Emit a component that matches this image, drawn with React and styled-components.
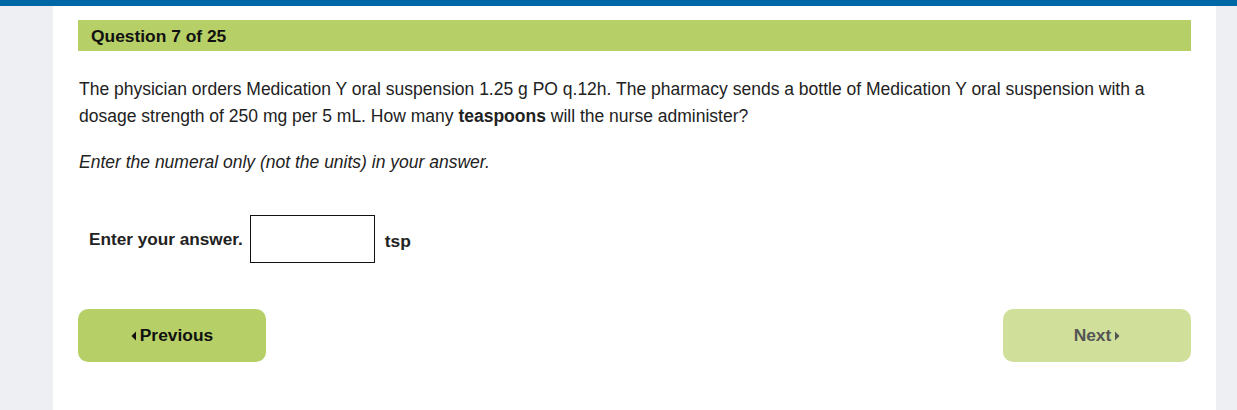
import styled, { createGlobalStyle } from "styled-components";

const GlobalStyle = createGlobalStyle`
  html, body {
    margin: 0;
    padding: 0;
    background: #eeeff3;
    font-family: "Liberation Sans", Arial, sans-serif;
    color: #222;
  }
`;

const TopBar = styled.div`
  height: 6px;
  background: #0067a6;
`;

const Page = styled.main`
  margin-left: 53px;
  width: 1163px;
  min-height: 404px;
  background: #fff;
  padding: 14px 25px 0;
  box-sizing: border-box;
`;

const Header = styled.h2`
  margin: 0;
  height: 31px;
  display: flex;
  align-items: center;
  padding: 1px 0 0 13px;
  box-sizing: border-box;
  background: #b6cf66;
  font-size: 17.4px;
  font-weight: bold;
  color: #111;
`;

const Question = styled.p`
  margin: 25px 0 0 1px;
  font-size: 17.5px;
  line-height: 27px;
  color: #222;
`;

const Hint = styled.p`
  margin: 19px 0 0 1px;
  font-size: 17.5px;
  line-height: 27px;
  font-style: italic;
  color: #222;
`;

const AnswerRow = styled.div`
  display: flex;
  align-items: center;
  margin-top: 39px;
  padding-left: 11px;
`;

const Label = styled.label`
  font-size: 17.2px;
  font-weight: bold;
  color: #222;
  margin-right: 7px;
`;

const Input = styled.input`
  width: 125px;
  height: 48px;
  box-sizing: border-box;
  border: 1px solid #111;
  border-radius: 0;
  outline: none;
  font-size: 16px;
  padding: 0 6px;
`;

const Unit = styled.span`
  font-size: 17.4px;
  font-weight: bold;
  color: #222;
  margin-left: 10px;
  margin-top: 5px;
`;

const Nav = styled.div`
  display: flex;
  justify-content: space-between;
  margin-top: 46px;
`;

const NavButton = styled.button`
  width: 188px;
  height: 53px;
  border: none;
  border-radius: 10px;
  background: ${(p) => (p.$disabled ? "#d0e09b" : "#b6cf66")};
  color: ${(p) => (p.$disabled ? "#555" : "#111")};
  font-family: "Liberation Sans", Arial, sans-serif;
  font-size: 17.4px;
  font-weight: bold;
  display: flex;
  align-items: center;
  justify-content: center;
  gap: 4px;
  cursor: pointer;
`;

const Caret = ({ dir }) => (
  <svg width="5" height="10" viewBox="0 0 5 10">
    {dir === "left" ? (
      <polygon points="5,0.5 5,9.5 0.5,5" fill="currentColor" />
    ) : (
      <polygon points="0,0.5 0,9.5 4.5,5" fill="currentColor" />
    )}
  </svg>
);

export default function App() {
  return (
    <>
      <GlobalStyle />
      <TopBar />
      <Page>
        <Header>Question 7 of 25</Header>
        <Question>
          The physician orders Medication Y oral suspension 1.25 g PO q.12h. The
          pharmacy sends a bottle of Medication Y oral suspension with a dosage
          strength of 250 mg per 5 mL. How many <b>teaspoons</b> will the nurse
          administer?
        </Question>
        <Hint>Enter the numeral only (not the units) in your answer.</Hint>
        <AnswerRow>
          <Label htmlFor="answer">Enter your answer.</Label>
          <Input id="answer" type="text" />
          <Unit>tsp</Unit>
        </AnswerRow>
        <Nav>
          <NavButton>
            <Caret dir="left" />
            Previous
          </NavButton>
          <NavButton $disabled>
            Next
            <Caret dir="right" />
          </NavButton>
        </Nav>
      </Page>
    </>
  );
}
